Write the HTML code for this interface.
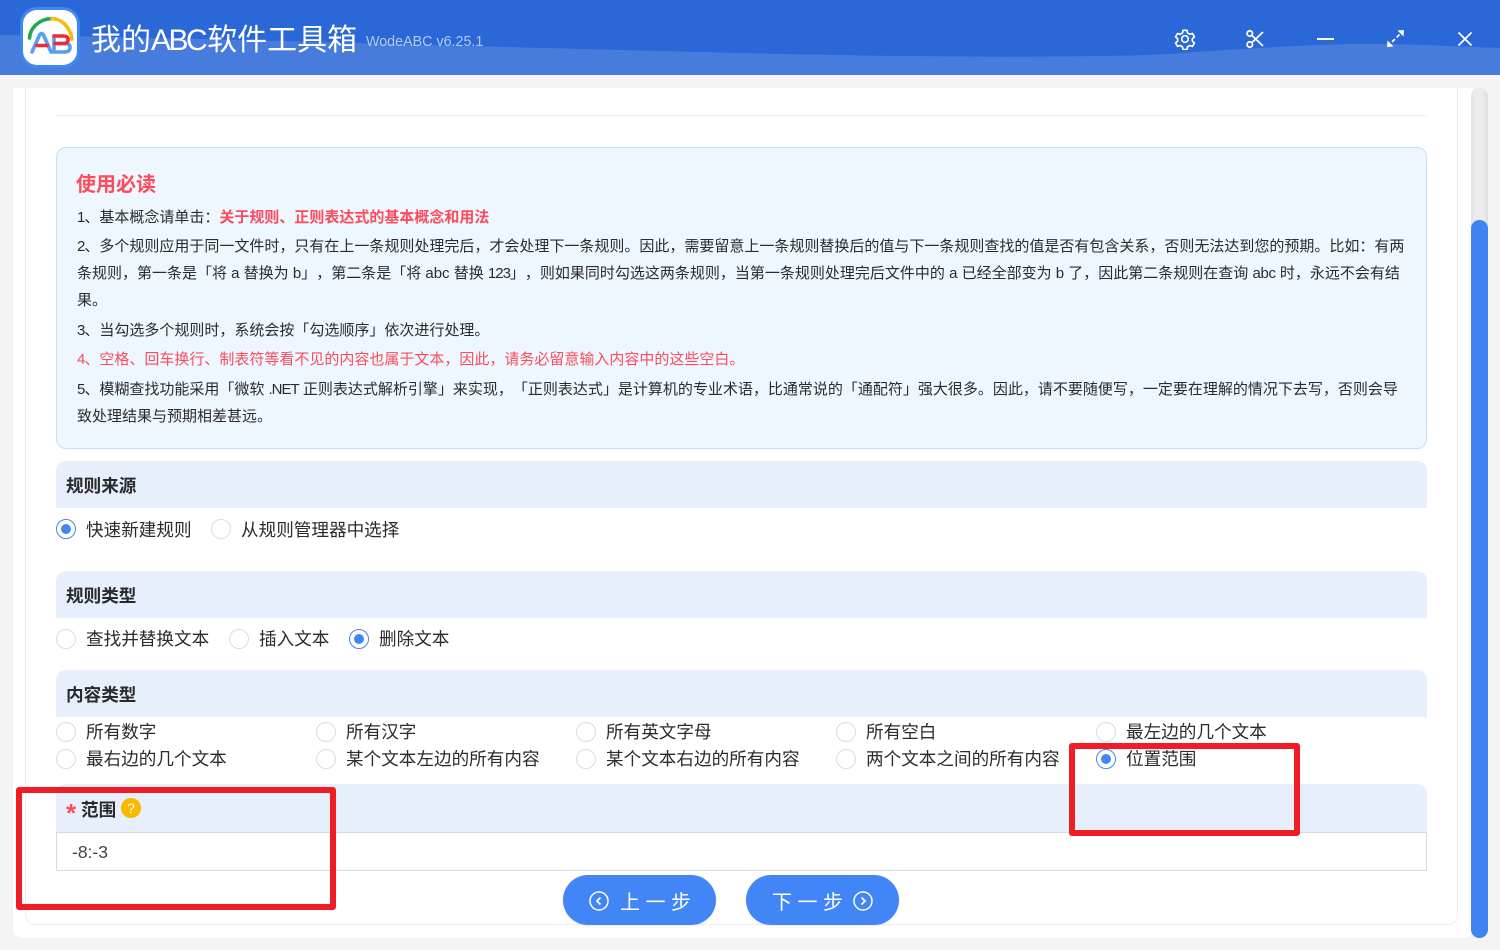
<!DOCTYPE html>
<html lang="zh-CN"><head><meta charset="utf-8"><title>我的ABC软件工具箱</title>
<style>
*{box-sizing:border-box;margin:0;padding:0}
html,body{width:1500px;height:950px;overflow:hidden;background:#f4f4f4;font-family:"Liberation Sans","Noto Sans CJK SC",sans-serif;color:#222;text-spacing-trim:space-all}
.a{position:absolute;white-space:nowrap}
.t{position:absolute;left:77px;font-size:15px;line-height:27px;height:27px;white-space:nowrap;color:#2b2b2b}
.t i{font-style:normal;letter-spacing:-1px}
.red{color:#fb4b5c}
.h{position:absolute;left:56px;width:1371px;background:#e7eefc;border-radius:10px 10px 0 0;font-size:17.6px;font-weight:700;color:#2a2a2a;padding-left:10px}
.r{position:absolute;width:20px;height:20px;border-radius:50%;border:1px solid #dcdcdc;background:#fff}
.r.c{border-color:#4285f7}
.r.c:after{content:"";position:absolute;left:4px;top:4px;width:10px;height:10px;border-radius:50%;background:#4285f7}
.l{position:absolute;font-size:17.6px;line-height:26px;height:26px;white-space:nowrap;color:#2b2b2b}
.box{position:absolute;border:6px solid #f01c26;border-radius:3px}
.btn{position:absolute;top:875px;width:153px;height:50px;border-radius:25px;background:#4285f7;color:#fff;font-size:20px;line-height:50px;box-shadow:0 1px 3px rgba(0,0,0,.08)}
.btn span{position:absolute;top:3px;white-space:nowrap;letter-spacing:5.5px}
.btn svg{position:absolute;top:16px}
</style></head><body>
<svg class="a" style="left:0;top:0" width="1500" height="75"><rect width="1500" height="75" fill="#2a67d7"/><path d="M0 35C200 38 420 45 700 52C900 57 1030 58 1150 55C1230 50 1310 43 1390 44C1430 45 1470 47 1500 48V75H0Z" fill="#487cdc"/></svg>
<svg class="a" style="left:19px;top:6px" width="62" height="63" viewBox="0 0 62 63">
<rect x="1" y="1" width="60" height="61" rx="17" fill="#3f87f5"/><rect x="4" y="4" width="54" height="55" rx="14" fill="#fdfeff"/>
<path d="M10.500 32C11 22 20 13 33 12.500" fill="none" stroke="#21a84f" stroke-width="3.600" stroke-linecap="round"/>
<path d="M33 12.500C43 13 51 21 53 33" fill="none" stroke="#f9bb10" stroke-width="3.600" stroke-linecap="round"/>
<path d="M13 46L20.500 29Q22.500 26 24.500 29L32 46" fill="none" stroke="#5b9cf5" stroke-width="3.600" stroke-linecap="round"/>
<path d="M18 39.500H28" stroke="#ef2b36" stroke-width="3.600" stroke-linecap="round"/>
<path d="M35 30V46H45Q51 46 51 41.500Q51 37.500 46 37.500H36" fill="none" stroke="#5b9cf5" stroke-width="3.600" stroke-linecap="round"/>
<path d="M35 30H44Q49 30 49 33.500Q49 37.500 45 37.500H36" fill="none" stroke="#ef2b36" stroke-width="3.600" stroke-linecap="round"/>
</svg>
<div class="a" style="left:91px;top:19px;font-size:30px;line-height:44px;color:#fff">我的<span style="letter-spacing:-2.500px">ABC</span><span style="margin-left:2px">软件工具箱</span></div>
<div class="a" style="left:366px;top:32px;font-size:14.300px;line-height:20px;color:#b4c8ef">WodeABC v6.25.1</div>
<svg class="a" style="left:1174px;top:28px" width="22" height="22" viewBox="0 0 24 24" fill="none" stroke="#fff" stroke-width="1.800" stroke-linejoin="round"><path d="M9.800 2.500h4.400l.6 3 2.400 1.400 2.900-1 2.200 3.800-2.300 2v2.600l2.300 2-2.200 3.800-2.900-1-2.400 1.400-.6 3H9.800l-.6-3-2.400-1.400-2.900 1-2.200-3.800 2.300-2v-2.600l-2.300-2 2.200-3.800 2.900 1 2.400-1.400z"/><circle cx="12" cy="12" r="3.600"/></svg>
<svg class="a" style="left:1245px;top:29px" width="20" height="20" viewBox="0 0 20 20" fill="none" stroke="#fff" stroke-width="1.800"><circle cx="4.800" cy="4.500" r="2.700"/><circle cx="4.800" cy="15.500" r="2.700"/><path d="M7 6.500L18 17M7 13.500L18 3"/></svg>
<div class="a" style="left:1317px;top:38px;width:17px;height:2px;background:#fff"></div>
<svg class="a" style="left:1386px;top:29px" width="19" height="19" viewBox="0 0 19 19" fill="#fff"><path d="M18 1L17.500 7.500L11.500 1.500Z"/><path d="M1 18L1.500 11.500L7.500 17.500Z"/><path d="M13.500 5.500L5.500 13.500" stroke="#fff" stroke-width="1.800" stroke-dasharray="4 2.500"/></svg>
<svg class="a" style="left:1457px;top:31px" width="16" height="16" viewBox="0 0 16 16" stroke="#fff" stroke-width="1.700"><path d="M1.500 1.500L14.500 14.500M14.500 1.500L1.500 14.500"/></svg>

<div class="a" style="left:13px;top:88px;width:1460px;height:850px;background:#fff;border-radius:0 0 10px 10px"></div>
<div class="a" style="left:25px;top:88px;width:1433px;height:837px;border:1px solid #eee;border-top:0;border-radius:0 0 10px 10px"></div>
<div class="a" style="left:56px;top:115px;width:1371px;height:1px;background:#eee"></div>
<div class="a" style="left:1471px;top:88px;width:17px;height:850px;border-radius:9px;background:linear-gradient(90deg,#e2e2e2,#ececec 25%,#ececec 70%,#dcdcdc)"></div>
<div class="a" style="left:1471px;top:220px;width:17px;height:718px;border-radius:9px;background:#3f82f1"></div>

<div class="a" style="left:56px;top:147px;width:1371px;height:302px;background:#eff7fe;border:1px solid #c3dff8;border-radius:10px"></div>
<div class="a red" style="left:76px;top:170px;font-size:20px;line-height:30px;font-weight:700">使用必读</div>
<div class="t" style="top:204px"><i>1</i>、基本概念请单击：<b class="red">关于规则、正则表达式的基本概念和用法</b></div>
<div class="t" style="top:233px"><i>2</i>、多个规则应用于同一文件时，只有在上一条规则处理完后，才会处理下一条规则。因此，需要留意上一条规则替换后的值与下一条规则查找的值是否有包含关系，否则无法达到您的预期。比如：有两</div>
<div class="t" style="top:260px">条规则，第一条是「将 a 替换为 b」，第二条是「将 abc 替换 <i>123</i>」，则如果同时勾选这两条规则，当第一条规则处理完后文件中的 a 已经全部变为 b 了，因此第二条规则在查询 <i style="letter-spacing:-.3px">abc</i> 时，永远不会有结</div>
<div class="t" style="top:287px">果。</div>
<div class="t" style="top:317px"><i>3</i>、当勾选多个规则时，系统会按「勾选顺序」依次进行处理。</div>
<div class="t red" style="top:346px;color:#fb4b5c"><i>4</i>、空格、回车换行、制表符等看不见的内容也属于文本，因此，请务必留意输入内容中的这些空白。</div>
<div class="t" style="top:376px"><i>5</i>、模糊查找功能采用「微软 <i>.NET</i> 正则表达式解析引擎」来实现，「正则表达式」是计算机的专业术语，比通常说的「通配符」强大很多。因此，请不要随便写，一定要在理解的情况下去写，否则会导</div>
<div class="t" style="top:403px">致处理结果与预期相差甚远。</div>

<div class="h" style="top:461px;height:47px;line-height:51px">规则来源</div>
<div class="r c" style="left:56px;top:519px"></div><div class="l" style="left:86px;top:517px">快速新建规则</div>
<div class="r" style="left:211px;top:519px"></div><div class="l" style="left:241px;top:517px">从规则管理器中选择</div>

<div class="h" style="top:571px;height:47px;line-height:51px">规则类型</div>
<div class="r" style="left:56px;top:629px"></div><div class="l" style="left:86px;top:626px">查找并替换文本</div>
<div class="r" style="left:229px;top:629px"></div><div class="l" style="left:259px;top:626px">插入文本</div>
<div class="r c" style="left:349px;top:629px"></div><div class="l" style="left:379px;top:626px">删除文本</div>

<div class="h" style="top:670px;height:47px;line-height:51px">内容类型</div>
<div class="r" style="left:56px;top:722px"></div><div class="l" style="left:86px;top:719px">所有数字</div>
<div class="r" style="left:316px;top:722px"></div><div class="l" style="left:346px;top:719px">所有汉字</div>
<div class="r" style="left:576px;top:722px"></div><div class="l" style="left:606px;top:719px">所有英文字母</div>
<div class="r" style="left:836px;top:722px"></div><div class="l" style="left:866px;top:719px">所有空白</div>
<div class="r" style="left:1096px;top:722px"></div><div class="l" style="left:1126px;top:719px">最左边的几个文本</div>
<div class="r" style="left:56px;top:749px"></div><div class="l" style="left:86px;top:746px">最右边的几个文本</div>
<div class="r" style="left:316px;top:749px"></div><div class="l" style="left:346px;top:746px">某个文本左边的所有内容</div>
<div class="r" style="left:576px;top:749px"></div><div class="l" style="left:606px;top:746px">某个文本右边的所有内容</div>
<div class="r" style="left:836px;top:749px"></div><div class="l" style="left:866px;top:746px">两个文本之间的所有内容</div>
<div class="r c" style="left:1096px;top:749px"></div><div class="l" style="left:1126px;top:746px">位置范围</div>

<div class="h" style="top:784px;height:49px"></div>
<div class="a" style="left:66px;top:800px;font-size:26px;line-height:26px;font-weight:700;color:#fb4b5c">*</div>
<div class="a" style="left:81px;top:797px;font-size:17.600px;line-height:26px;font-weight:700;color:#2a2a2a">范围</div>
<div class="a" style="left:121px;top:798px;width:20px;height:20px;border-radius:50%;background:#f7b900;color:#fff;font-size:14px;line-height:20px;text-align:center">?</div>
<div class="a" style="left:56px;top:832px;width:1371px;height:39px;background:#fff;border:1px solid #d9d9d9;border-radius:0 0 2px 2px"></div>
<div class="a" style="left:72px;top:839px;font-size:17.500px;line-height:26px;color:#444">-8:-3</div>

<div class="btn" style="left:563px"><svg style="left:26px" width="20" height="20" viewBox="0 0 20 20" fill="none" stroke="#fff" stroke-width="1.500"><circle cx="10" cy="10" r="9"/><path d="M11.500 6.500L8 10l3.500 3.500" stroke-width="1.800"/></svg><span style="left:57px">上一步</span></div>
<div class="btn" style="left:746px"><span style="left:26px">下一步</span><svg style="left:107px" width="20" height="20" viewBox="0 0 20 20" fill="none" stroke="#fff" stroke-width="1.500"><circle cx="10" cy="10" r="9"/><path d="M8.500 6.500L12 10l-3.500 3.500" stroke-width="1.800"/></svg></div>

<div class="box" style="left:16px;top:787px;width:320px;height:123px"></div>
<div class="box" style="left:1069px;top:743px;width:231px;height:93px"></div>
</body></html>
